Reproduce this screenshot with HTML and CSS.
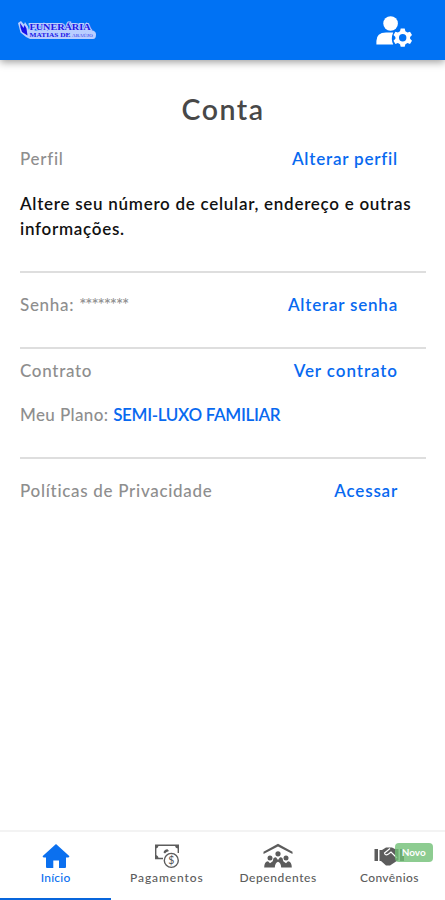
FILE: index.html
```html
<!DOCTYPE html>
<html lang="pt-BR">
<head>
<meta charset="utf-8">
<meta name="viewport" content="width=device-width, initial-scale=1">
<title>Conta</title>
<link rel="stylesheet" href="styles.css">
</head>
<body>
<header class="topbar">
  <svg class="logo" viewBox="0 0 80 22" role="img" aria-label="Funerária">
    <path class="logo-plate" d="M1 4L4 2L7 5.500L8 3L11 7.500L12 11.500H76Q79 12.500 79 15.500Q79 20 76 20H13L9 18L3.500 13.500Z"/>
    <path class="logo-hand" d="M3 4L6.500 9L7.500 6L9.500 9.500L10.500 16.500L5 13L3.500 8.500Z"/>
    <text class="logo-name" x="12.500" y="11" textLength="61" lengthAdjust="spacingAndGlyphs">FUNERÁRIA</text>
    <text class="logo-sub" x="12.500" y="18.300" textLength="41" lengthAdjust="spacingAndGlyphs">MATIAS DE</text>
    <text class="logo-tail" x="55" y="17.800" textLength="21" lengthAdjust="spacingAndGlyphs">ARAÚJO</text>
  </svg>
  <svg class="account" viewBox="0 0 36 32" aria-label="Conta">
    <circle cx="14.6" cy="7.5" r="7.3"/>
    <path d="M.4 28.4V25Q.4 16.5 10 16.4H17.2Q14.5 22.5 17.2 28.4Z"/>
    <path fill-rule="evenodd" d="M24.7 12.5H28.7L29.4 15.3L31.5 16.5L34 15.8L36 19L34.1 21L34.1 22.7L36 24.7L34 27.9L31.5 27.1L29.4 28.3L28.7 30.8H24.7L24 28.3L21.9 27.1L19.4 27.9L17.5 24.7L19.4 22.7V21L17.5 19L19.4 15.8L21.9 16.5L24 15.3ZM26.7 18.1A3.7 3.7 0 1 0 26.7 25.5A3.7 3.7 0 1 0 26.7 18.1Z"/>
  </svg>
</header>
<main class="page">
  <h1 class="title">Conta</h1>
  <section class="block profile">
    <div class="row"><span>Perfil</span><a class="link">Alterar perfil</a></div>
    <p class="note">Altere seu número de celular, endereço e outras informações.</p>
  </section>
  <section class="block password">
    <div class="row"><span>Senha: <span class="stars">********</span></span><a class="link">Alterar senha</a></div>
  </section>
  <section class="block contract">
    <div class="row"><span>Contrato</span><a class="link link-wide">Ver contrato</a></div>
    <p class="plan">Meu Plano: <b>SEMI-LUXO FAMILIAR</b></p>
  </section>
  <section class="block privacy">
    <div class="row"><span>Políticas de Privacidade</span><a class="link">Acessar</a></div>
  </section>
</main>
<nav class="tabs">
  <a class="tab active">
    <svg viewBox="0 0 30 26"><path d="M15 1L28.5 13.2L27.5 14.5H25V24Q25 25 24 25H18V17.5H12.3V25H6Q5 25 5 24V14.5H2.5L1.5 13.2Z"/></svg>
    <span class="label-home">Início</span>
  </a>
  <a class="tab">
    <svg viewBox="0 0 30 26"><g fill="none" stroke="currentColor" stroke-width="1.4"><path d="M11 15.500H3.700V2.200H26.300V10"/><circle cx="19.300" cy="17.400" r="7"/></g><path d="M3 2H6.500Q6.500 5.500 3 5.500ZM23 2H26.500V5.500Q23 5.500 23 2ZM3 12Q6.500 12 6.500 15.500H3ZM11.500 9.500Q12 6.500 15.500 6.300L17 8Q13.500 9 13 10.500Z"/><text class="coin" x="19.300" y="21.300">$</text></svg>
    <span class="label-payments">Pagamentos</span>
  </a>
  <a class="tab">
    <svg viewBox="0 0 30 26"><path d="M15 .8L29.5 8.7V11L15 3.5L.5 11V8.7Z"/><circle cx="15" cy="10.8" r="2.6"/><circle cx="7" cy="14.9" r="2.5"/><circle cx="23" cy="14.9" r="2.5"/><path d="M1.2 24.500Q1.200 18.700 5 18.200L7 20.200L9.700 18.200L10.500 15.300Q11.500 14.300 13 14.300L15 17L17 14.300Q19 14.300 19.500 15.300L20.300 18.200L23 20.200L25 18.200Q28.800 18.700 28.800 24.500H18.200Q18 20 15 18.700Q12 20 11.800 24.500Z"/></svg>
    <span class="label-family">Dependentes</span>
  </a>
  <a class="tab">
    <svg viewBox="0 0 30 26"><path d="M.5 6H4V18H.5ZM5.500 7H8L12 4.500H18L21 6H24.500V17L22 18.500L16 22.500H12L7 18H5.500ZM26 6H30V18H26Z"/><path class="crease" d="M16 5.500L10.500 10Q11 13 14.500 11L17 9L23 15"/></svg>
    <span class="label-deals">Convênios</span>
    <span class="badge">Novo</span>
  </a>
</nav>
</body>
</html>
```
FILE: styles.css
```css
* { box-sizing: border-box; }
body {
  margin: 0;
  height: 900px;
  display: flex;
  flex-direction: column;
  background: #fff;
  color: #8e8e8e;
  font: 500 17px/25px Lato, "Open Sans", sans-serif;
  overflow: hidden;
}
.topbar {
  height: 60px;
  flex: none;
  display: flex;
  justify-content: space-between;
  padding: 16px 33px 0 17px;
  background: #0072f4;
  box-shadow: 0 2px 8px rgba(0, 0, 0, .4);
}
.logo { width: 80px; height: 22px; margin-top: 3px; }
.logo-plate { fill: #b9ceff; }
.logo-hand { fill: #1712e8; }
.logo text { font-family: "Liberation Serif", serif; font-weight: 700; fill: #1c17e6; stroke: #b9ceff; stroke-width: 2px; paint-order: stroke; }
.logo .logo-name { font-size: 8.5px; }
.logo .logo-sub { font-size: 6px; stroke-width: .3px; }
.logo .logo-tail { font-size: 5px; fill: #5a66ee; stroke-width: .3px; }
.account { width: 36px; height: 32px; fill: #fff; }
.page { flex: 1; padding: 30px 19px 0 20px; }
.title {
  margin: 0;
  height: 38px;
  text-align: center;
  font-size: 28.5px;
  line-height: 38px;
  font-weight: 600;
  letter-spacing: 1.5px;
  color: #484848;
}
.row { display: flex; justify-content: space-between; padding-right: 28px; letter-spacing: .7px; }
.link, .plan b { color: #0869f0; font-weight: 600; }
.link { letter-spacing: .79px; }
.link-wide { letter-spacing: .92px; }
.stars { letter-spacing: -1.1px; }
.block { border-bottom: 2px solid #dedede; }
.profile { height: 145px; padding-top: 18px; }
.note { margin: 20px -10px 0 0; padding-right: 10px; color: #111; font-weight: 600; letter-spacing: .72px; }
.password { height: 76px; padding-top: 19px; }
.contract { height: 110px; padding-top: 9px; }
.plan { margin: 19px 0 0; letter-spacing: .38px; }
.plan b { letter-spacing: -.33px; }
.privacy { padding-top: 19px; border: 0; }
.tabs {
  height: 70px;
  flex: none;
  display: grid;
  grid-template-columns: repeat(4, 1fr);
  border-top: 2px solid #f3f3f3;
  font-size: 12px;
  line-height: 16px;
  color: #5c5c5c;
}
.tab { position: relative; display: flex; flex-direction: column; align-items: center; padding-top: 11px; }
.tab svg { width: 30px; height: 26px; fill: currentColor; margin-bottom: 1px; }
.active { color: #0b70ef; border-bottom: 2px solid #0866dc; }
.label-home { letter-spacing: .2px; }
.label-payments { letter-spacing: .9px; }
.label-family { letter-spacing: .6px; }
.label-deals { letter-spacing: .4px; }
.coin { font: 500 10.5px Lato, sans-serif; text-anchor: middle; }
.crease { fill: none; stroke: #fff; stroke-width: 1.2; }
.badge {
  position: absolute;
  left: 61px;
  top: 11px;
  width: 38px;
  height: 19px;
  border-radius: 4px;
  background: rgba(112, 191, 117, .8);
  color: #fff;
  font-size: 10px;
  font-weight: 700;
  line-height: 19px;
  text-align: center;
}
```
